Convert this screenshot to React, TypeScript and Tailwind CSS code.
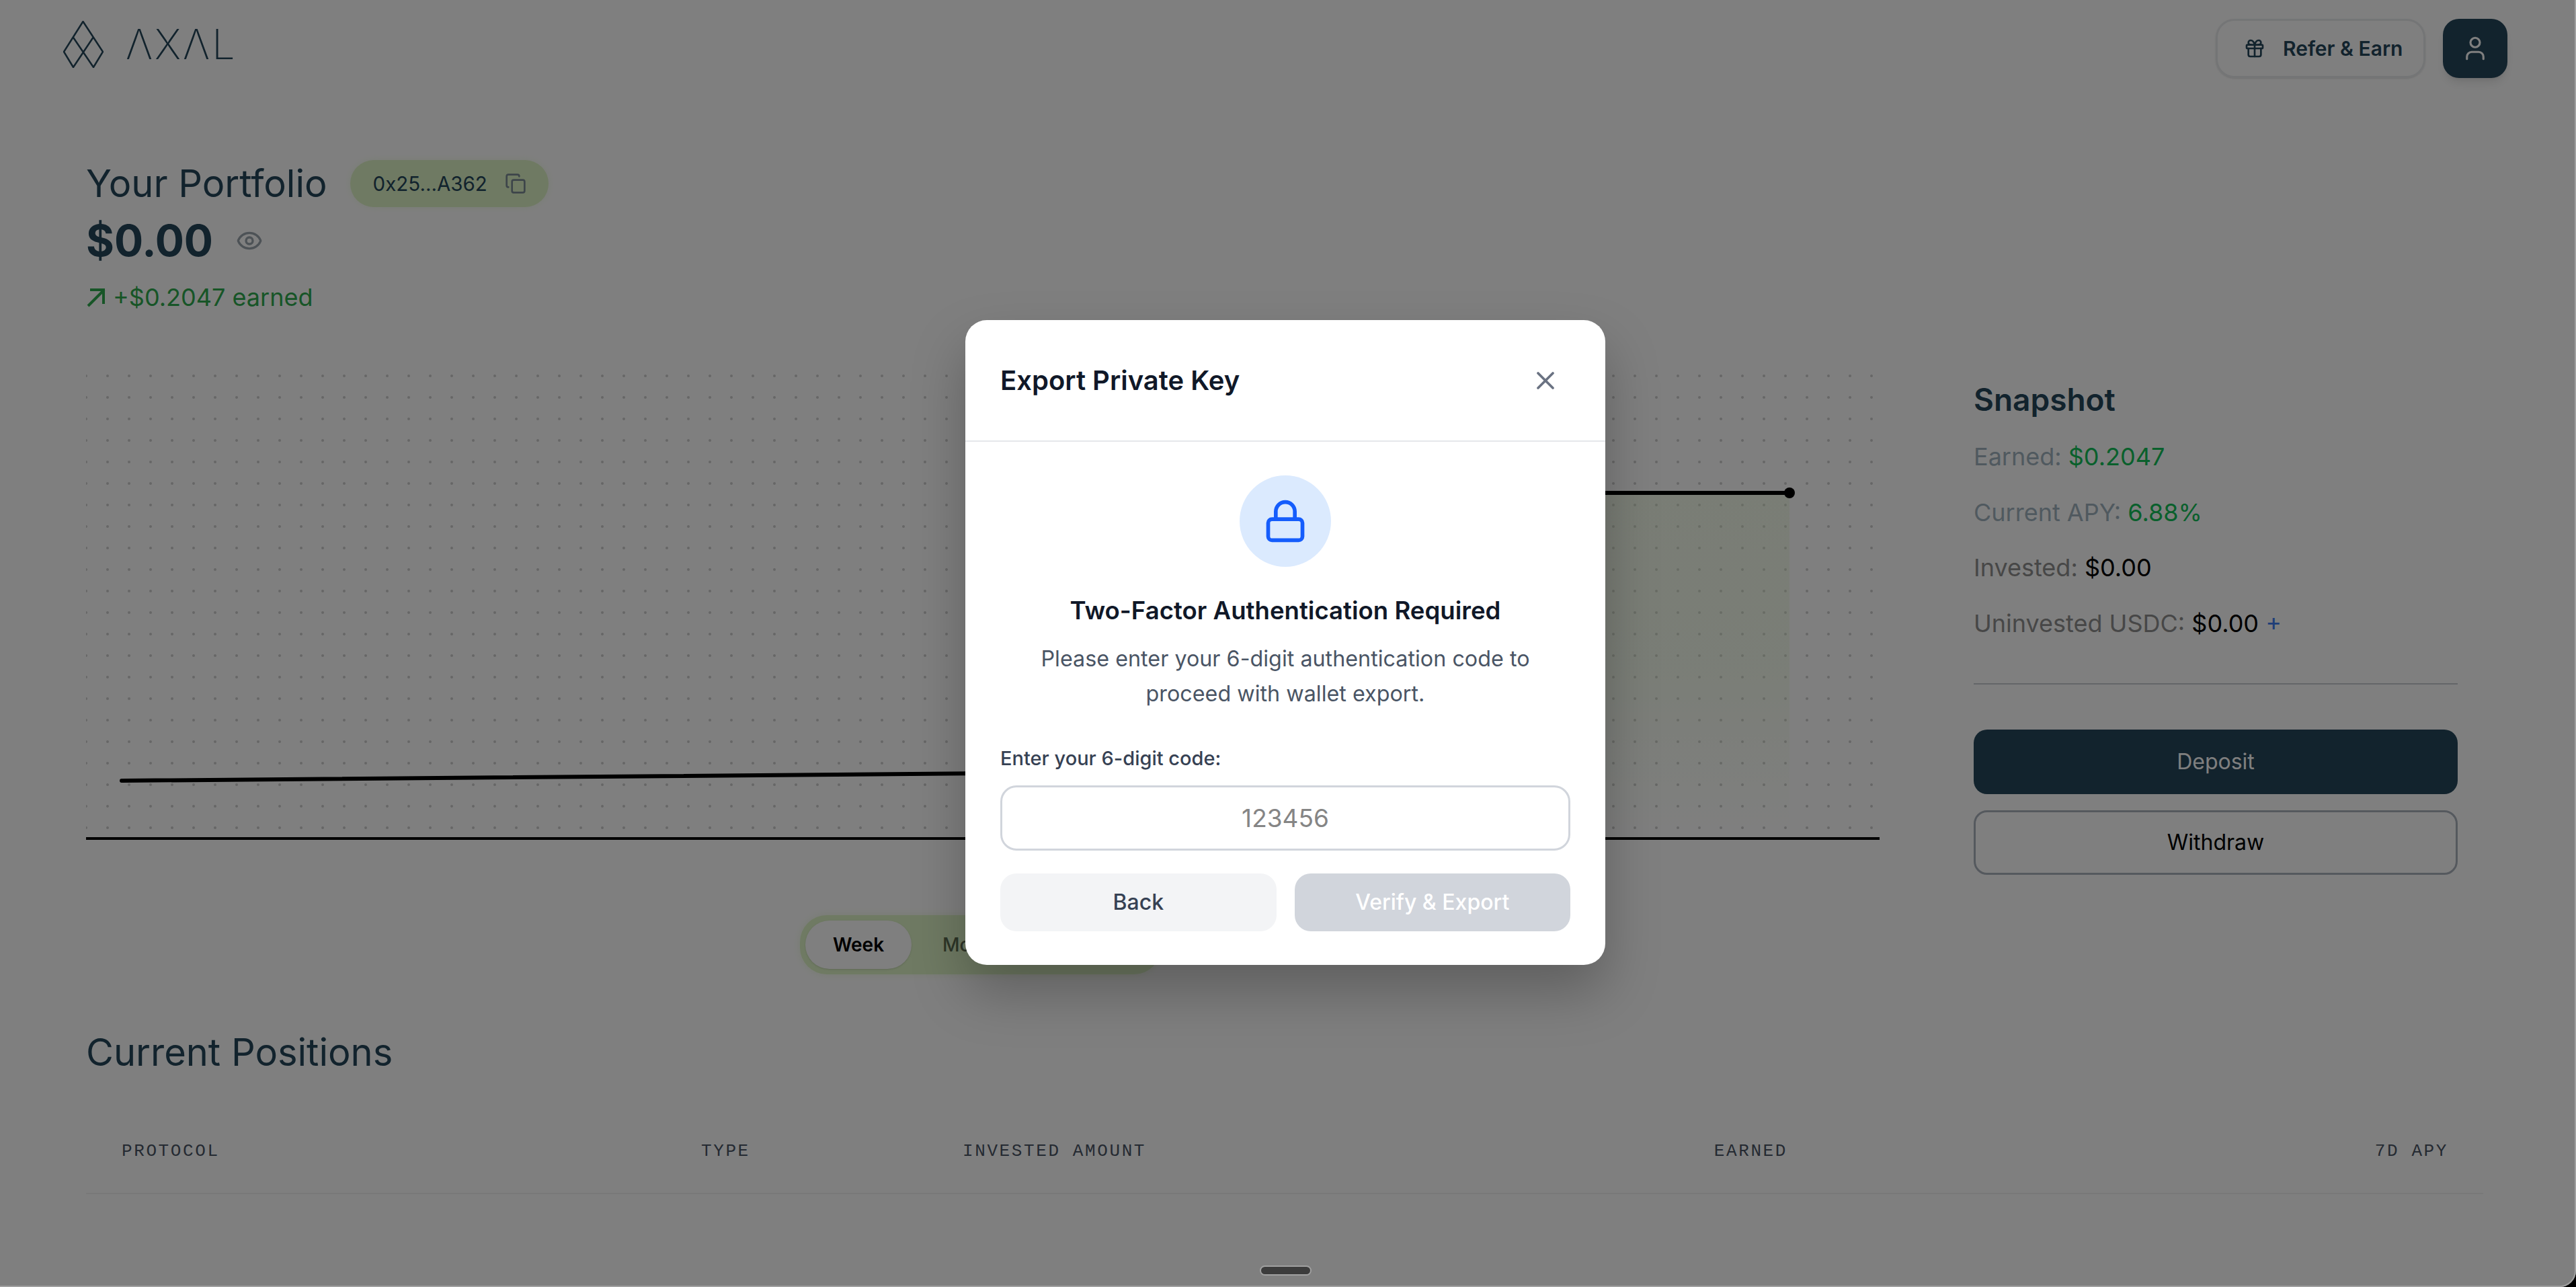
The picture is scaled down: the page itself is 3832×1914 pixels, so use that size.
import { Copy, Eye, Gift, Lock, User, X } from "lucide-react";

const stats = [
  { label: "Earned:", value: "$0.2047", labelCls: "text-[#a0b3bf]", valueCls: "text-[#12c058]" },
  { label: "Current APY:", value: "6.88%", labelCls: "text-[#a0b3bf]", valueCls: "text-[#12c058]" },
  { label: "Invested:", value: "$0.00", labelCls: "text-[#8e8e8e]", valueCls: "text-black" },
];

const Logo = () => (
  <div className="mb-[12px] flex items-center">
    <svg width="60" height="70" viewBox="0 0 60 70" fill="none" stroke="#24465a" strokeWidth="2.5" className="shrink-0">
      <path d="M14.5 24 L45 69 L59 46 L29.5 1 L1 46 L15 69 L45 24" strokeLinejoin="round" />
    </svg>
    <span className="ml-[33px] text-[61px] leading-none font-extralight tracking-[3px] text-[#24465a]">ΛXΛL</span>
  </div>
);

export default function App() {
  return (
    <div className="relative h-[1914px] w-[3832px] overflow-hidden bg-white font-['Inter',sans-serif]">
      <header className="flex items-center justify-between pt-[28px] pl-[94px] pr-[102px]">
        <Logo />
        <div className="flex items-center gap-[26px]">
          <button className="flex h-[88px] w-[312px] items-center gap-[26px] rounded-[28px] border-[3px] border-[#e8eaec] pl-[39px] text-[30px] font-semibold text-[#24465a] shadow-sm">
            <Gift size={32} />
            Refer &amp; Earn
          </button>
          <button className="flex h-[88px] w-[96px] items-center justify-center rounded-[24px] bg-[#24465a] text-white shadow-lg">
            <User size={42} strokeWidth={1.8} />
          </button>
        </div>
      </header>

      <main className="pl-[128px] pr-[138px]">
        <section className="mt-[122px]">
          <div className="flex items-center gap-[34px]">
            <h1 className="text-[56px] leading-[70px] text-[#24465a]">Your Portfolio</h1>
            <div className="flex h-[70px] w-[295px] items-center gap-[26px] rounded-full bg-[#def4c6] pl-[34px] text-[29.5px] text-[#24465a] shadow-[0_0_12px_rgba(222,244,198,0.4)]">
              0x25...A362
              <Copy size={32} className="text-[#7a8a94]" />
            </div>
          </div>
          <div className="mt-[10px] flex items-center gap-[34px]">
            <span className="text-[64px] leading-[80px] font-bold text-[#24465a]">$0.00</span>
            <Eye size={40} className="text-[#9aa5ad]" />
          </div>
          <div className="mt-[20px] flex items-center gap-[10px] text-[36px] leading-[48px] text-[#2eaa4e]">
            <svg width="30" height="30" viewBox="0 0 30 30" fill="none" stroke="currentColor" strokeWidth="4">
              <path d="M3 28 L27 4 M6 4 H26 V25" />
            </svg>
            +$0.2047 earned
          </div>
        </section>

        <section className="flex items-start">
          <div className="w-[2668px]">
            <svg width="2668" height="698" viewBox="0 0 2668 698" className="mt-[85px] block" fill="none">
              <defs>
                <pattern id="dots" x="-2" y="-2" width="32" height="32" patternUnits="userSpaceOnUse">
                  <circle cx="2" cy="10" r="2" fill="#cccccc" />
                </pattern>
                <linearGradient id="area" x1="0" y1="0" x2="0" y2="1">
                  <stop offset="0" stopColor="#def4c6" stopOpacity="0.35" />
                  <stop offset="0.5" stopColor="#def4c6" stopOpacity="0.3" />
                  <stop offset="1" stopColor="#def4c6" stopOpacity="0" />
                </linearGradient>
              </defs>
              <rect width="2668" height="694" fill="url(#dots)" />
              <path d="M1800 182 L2534 182 L2534 694 L1700 694 Z" fill="url(#area)" />
              <path d="M53 610 L1700 596 L1800 182 L2534 182" stroke="#000" strokeWidth="6" strokeLinecap="round" />
              <circle cx="2534" cy="182" r="8" fill="#000" />
              <rect y="694" width="2668" height="4" fill="#000" />
            </svg>
            <div className="ml-[1062px] mt-[112px] flex h-[88px] w-[537px] items-center gap-[46px] rounded-[40px] bg-[#def4c6] pl-[8px] text-[28px] shadow-[0_0_12px_rgba(222,244,198,0.5)]">
              <span className="flex h-[72px] w-[158px] items-center justify-center rounded-[36px] bg-white font-semibold text-black shadow-sm">Week</span>
              <span className="font-medium text-[#5a6a50]">Month</span>
              <span className="font-medium text-[#5a6a50]">Year</span>
            </div>
          </div>

          <aside className="ml-[140px] w-[720px] pt-[100px]">
            <h2 className="text-[46px] leading-[56px] font-semibold text-[#24465a]">Snapshot</h2>
            <div className="mt-[16px] text-[36px] leading-[82.5px]">
              {stats.map((s) => (
                <div key={s.label}>
                  <span className={s.labelCls}>{s.label}</span> <span className={s.valueCls}>{s.value}</span>
                </div>
              ))}
              <div>
                <span className="text-[#8e8e8e]">Uninvested USDC:</span> <span className="text-black">$0.00</span>{" "}
                <span className="text-[#3f7cf0]">+</span>
              </div>
            </div>
            <div className="mt-[48px] h-[2px] bg-[#c8ccd0]" />
            <button className="mt-[67px] block h-[96px] w-full rounded-[20px] bg-[#24465a] text-[32px] text-white">Deposit</button>
            <button className="mt-[24px] block h-[96px] w-full rounded-[20px] border-[3px] border-[#abb2bd] text-[32px] text-black">Withdraw</button>
          </aside>
        </section>

        <section className="mt-[81px]">
          <h2 className="text-[56px] leading-[70px] text-[#24465a]">Current Positions</h2>
          <div className="mt-[96px] grid grid-cols-[862px_389px_500px_727px_983px] border-b-[2px] border-[#f0f0f0] pl-[53px] pb-[46px] font-['Liberation_Mono',monospace] text-[26px] leading-[32px] tracking-[2.6px] text-[#4a5565]">
            <span>PROTOCOL</span>
            <span>TYPE</span>
            <span>INVESTED AMOUNT</span>
            <span className="text-right">EARNED</span>
            <span className="text-right">7D APY</span>
          </div>
        </section>
      </main>

      <div className="absolute inset-0 bg-black/50" />
      <div className="absolute inset-x-0 top-[476px] flex justify-center pr-[8px]">
        <div className="w-[952px] rounded-[32px] bg-white shadow-[0_40px_80px_rgba(0,0,0,0.25)]">
          <div className="flex h-[181px] items-center justify-between border-b-[2px] border-[#e5e7eb] pl-[52px] pr-[67px]">
            <h3 className="text-[40px] font-semibold text-[#101828]">Export Private Key</h3>
            <X size={44} className="text-[#6a7282]" />
          </div>
          <div className="flex flex-col items-center px-[52px] pt-[50px] pb-[50px]">
            <div className="flex h-[136px] w-[136px] items-center justify-center rounded-full bg-[#dbeafe]">
              <Lock size={68} strokeWidth={2} className="text-[#155dfc]" />
            </div>
            <h4 className="mt-[40px] text-[36.6px] leading-[50px] font-semibold text-[#101828]">Two-Factor Authentication Required</h4>
            <p className="mt-[21px] text-center text-[32.3px] leading-[52px] text-[#4a5565]">
              Please enter your 6-digit authentication code to
              <br />
              proceed with wallet export.
            </p>
            <label className="mt-[50px] self-start text-[29px] leading-[40px] font-medium text-[#364153]">Enter your 6-digit code:</label>
            <input
              placeholder="123456"
              className="mt-[20px] h-[97px] w-full rounded-[24px] border-[3px] border-[#d1d5dc] text-center text-[37px] placeholder:text-[#858585]"
            />
            <div className="mt-[34px] grid w-full grid-cols-2 gap-[27px]">
              <button className="h-[86px] rounded-[24px] bg-[#f3f4f6] text-[32px] font-medium text-[#364153]">Back</button>
              <button className="h-[86px] rounded-[24px] bg-[#d1d5dc] text-[32px] font-medium text-white">Verify &amp; Export</button>
            </div>
          </div>
        </div>
      </div>

      {/* device frame: window edge and home handle */}
      <div className="pointer-events-none absolute inset-0 rounded-br-[24px] border-r-[2px] border-b-[2px] border-[#a0a0a0] shadow-[0_0_0_40px_#000]" />
      <div className="absolute left-[1874px] top-[1882px] h-[15px] w-[77px] rounded-full border-[2px] border-[#a0a0a0] bg-[#3c3c3c]" />
    </div>
  );
}
